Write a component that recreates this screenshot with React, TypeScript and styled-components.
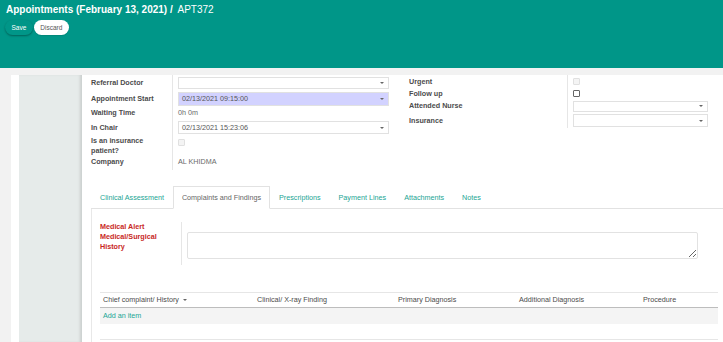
import React from "react";
import styled, { createGlobalStyle } from "styled-components";

const GlobalStyle = createGlobalStyle`
  html, body {
    margin: 0;
    padding: 0;
    overflow: hidden;
  }
  body {
    font-family: "Liberation Sans", Arial, sans-serif;
    background: #f2f2f2;
  }
`;

const TEAL = "#009688";
const LINK = "#21a594";
const SMALL = "7.2px";

const Header = styled.header`
  height: 68px;
  box-sizing: border-box;
  background: ${TEAL};
  padding: 4px 0 0 6px;
`;

const Title = styled.div`
  color: #fff;
  font-size: 10px;
  line-height: 12px;
  font-weight: bold;
  white-space: nowrap;
`;

const Crumb = styled.span`
  font-weight: normal;
  margin-left: 2px;
`;

const ButtonRow = styled.div`
  display: flex;
  gap: 1px;
  margin: 4px 0 0 -1px;
`;

const Button = styled.button<{ $primary?: boolean }>`
  height: 15px;
  padding: 0 6.5px;
  border: none;
  border-radius: 8px;
  font-family: inherit;
  font-size: 6.5px;
  line-height: 15px;
  background: ${(p) => (p.$primary ? TEAL : "#fff")};
  color: ${(p) => (p.$primary ? "#fff" : "#555")};
  box-shadow: ${(p) =>
    p.$primary ? "0 1px 2px rgba(0,0,0,0.35)" : "0 1px 1px rgba(0,0,0,0.1)"};
`;

const Sheet = styled.div`
  padding: 7px 0 0 11px;
`;

const Card = styled.div`
  display: flex;
  height: 267px;
  overflow: hidden;
  padding-left: 8px;
  background: #fff;
`;

const Strip = styled.div`
  flex: none;
  width: 63px;
  background: #e6ebea;
  box-shadow: inset -3px 0 3px -1px rgba(0, 0, 0, 0.12);
`;

const Content = styled.div`
  flex: 1;
  min-width: 0;
  padding-left: 9px;
`;

const FormTop = styled.div`
  display: flex;
  gap: 20px;
  align-items: flex-start;
`;

const Group = styled.div<{ $label: number; $field: number; $rows: string }>`
  display: grid;
  grid-template-columns: ${(p) => p.$label}px ${(p) => p.$field}px;
  grid-template-rows: ${(p) => p.$rows};
  font-size: ${SMALL};
`;

const Label = styled.div<{ $top?: boolean; $alert?: boolean }>`
  display: flex;
  align-items: ${(p) => (p.$top ? "flex-start" : "center")};
  border-right: 1px solid #e6e6e6;
  font-weight: bold;
  line-height: 10px;
  color: ${(p) => (p.$alert ? "#c8281e" : "#4c4c4c")};
  padding-right: 4px;
`;

const Cell = styled.div<{ $top?: boolean }>`
  display: flex;
  align-items: ${(p) => (p.$top ? "flex-start" : "center")};
  padding-left: 5px;
  color: #6a6a6a;
  line-height: 10px;
`;

const Select = styled.div<{ $h: number; $required?: boolean }>`
  display: flex;
  align-items: center;
  width: 100%;
  height: ${(p) => p.$h}px;
  box-sizing: border-box;
  padding-left: 3px;
  border: 1px solid #e1e1e1;
  background: ${(p) => (p.$required ? "#d2d2ff" : "#fff")};
  color: #555;
`;

const Caret = styled.span`
  margin-left: auto;
  margin-right: 4px;
  border-left: 2px solid transparent;
  border-right: 2px solid transparent;
  border-top: 2px solid #666;
`;

const Check = styled.span<{ $disabled?: boolean; $mt?: number }>`
  display: block;
  width: 7px;
  height: 7px;
  margin-top: ${(p) => p.$mt ?? 0}px;
  box-sizing: border-box;
  border: 1px solid ${(p) => (p.$disabled ? "#e0e0e0" : "#666")};
  border-radius: 1px;
  background: ${(p) => (p.$disabled ? "#f4f4f4" : "#fff")};
`;

const TabNav = styled.div`
  display: flex;
  margin-top: 16px;
  border-bottom: 1px solid #e2e2e2;
  font-size: ${SMALL};
`;

const Tab = styled.div<{ $active?: boolean }>`
  height: 21px;
  line-height: 21px;
  padding: 0 8px;
  margin-bottom: -1px;
  border: 1px solid transparent;
  border-color: ${(p) => (p.$active ? "#e2e2e2 #e2e2e2 #fff" : "transparent")};
  background: ${(p) => (p.$active ? "#fff" : "transparent")};
  color: ${(p) => (p.$active ? "#666" : LINK)};
  white-space: nowrap;
`;

const NotebookBody = styled.div`
  height: 133px;
  padding: 13px 0 0 8px;
  border-left: 1px solid #e8e8e8;
`;

const TextArea = styled.textarea`
  width: 511px;
  height: 27px;
  margin-top: 10px;
  box-sizing: border-box;
  border: 1px solid #e2e2e2;
  border-radius: 2px;
  resize: vertical;
  font-family: inherit;
`;

const Table = styled.div`
  width: 618px;
  margin-top: 27px;
  font-size: ${SMALL};
`;

const Columns = styled.div`
  display: grid;
  grid-template-columns: 154px 141px 121px 124px 1fr;
  height: 14px;
  line-height: 14px;
  border-top: 1px solid #e6e6e6;
  border-bottom: 1px solid #bdbdbd;
  color: #4c4c4c;
`;

const Column = styled.div`
  display: flex;
  align-items: center;
  padding-left: 3px;
  white-space: nowrap;
`;

const SortCaret = styled(Caret)`
  margin-left: 4px;
  margin-right: 0;
`;

const Row = styled.div<{ $shade?: boolean }>`
  height: 16px;
  line-height: 16px;
  box-sizing: border-box;
  padding-left: 3px;
  background: ${(p) => (p.$shade ? "#f4f4f4" : "#fff")};
  border-bottom: ${(p) => (p.$shade ? "none" : "1px solid #e6e6e6")};
  color: ${LINK};
`;

const tabs = [
  "Clinical Assessment",
  "Complaints and Findings",
  "Prescriptions",
  "Payment Lines",
  "Attachments",
  "Notes",
];

const columns = [
  "Chief complaint/ History",
  "Clinical/ X-ray Finding",
  "Primary Diagnosis",
  "Additional Diagnosis",
  "Procedure",
];

export default function App() {
  return (
    <>
      <GlobalStyle />
      <Header>
        <Title>
          Appointments (February 13, 2021) / <Crumb>APT372</Crumb>
        </Title>
        <ButtonRow>
          <Button $primary>Save</Button>
          <Button>Discard</Button>
        </ButtonRow>
      </Header>
      <Sheet>
        <Card>
          <Strip />
          <Content>
            <FormTop>
              <Group $label={82} $field={216} $rows="16px 16px 12px 17px 21px 13px">
                <Label>Referral Doctor</Label>
                <Cell>
                  <Select $h={12}>
                    <Caret />
                  </Select>
                </Cell>
                <Label>Appointment Start</Label>
                <Cell>
                  <Select $h={14} $required>
                    02/13/2021 09:15:00
                    <Caret />
                  </Select>
                </Cell>
                <Label>Waiting Time</Label>
                <Cell>0h 0m</Cell>
                <Label>In Chair</Label>
                <Cell>
                  <Select $h={13}>
                    02/13/2021 15:23:06
                    <Caret />
                  </Select>
                </Cell>
                <Label $top>Is an insurance patient?</Label>
                <Cell $top>
                  <Check $disabled $mt={3} />
                </Cell>
                <Label $top>Company</Label>
                <Cell $top>AL KHIDMA</Cell>
              </Group>
              <Group $label={159} $field={140} $rows="13px 11px 14px 15px">
                <Label>Urgent</Label>
                <Cell>
                  <Check $disabled />
                </Cell>
                <Label>Follow up</Label>
                <Cell>
                  <Check />
                </Cell>
                <Label>Attended Nurse</Label>
                <Cell>
                  <Select $h={11}>
                    <Caret />
                  </Select>
                </Cell>
                <Label>Insurance</Label>
                <Cell>
                  <Select $h={13}>
                    <Caret />
                  </Select>
                </Cell>
              </Group>
            </FormTop>
            <TabNav>
              {tabs.map((t) => (
                <Tab key={t} $active={t === "Complaints and Findings"}>
                  {t}
                </Tab>
              ))}
            </TabNav>
            <NotebookBody>
              <Group $label={82} $field={520} $rows="43px">
                <Label $top $alert>
                  Medical Alert
                  <br />
                  Medical/Surgical
                  <br />
                  History
                </Label>
                <Cell $top>
                  <TextArea />
                </Cell>
              </Group>
              <Table>
                <Columns>
                  {columns.map((c, i) => (
                    <Column key={c}>
                      {c}
                      {i === 0 && <SortCaret />}
                    </Column>
                  ))}
                </Columns>
                <Row $shade>Add an item</Row>
                <Row />
              </Table>
            </NotebookBody>
          </Content>
        </Card>
      </Sheet>
    </>
  );
}
